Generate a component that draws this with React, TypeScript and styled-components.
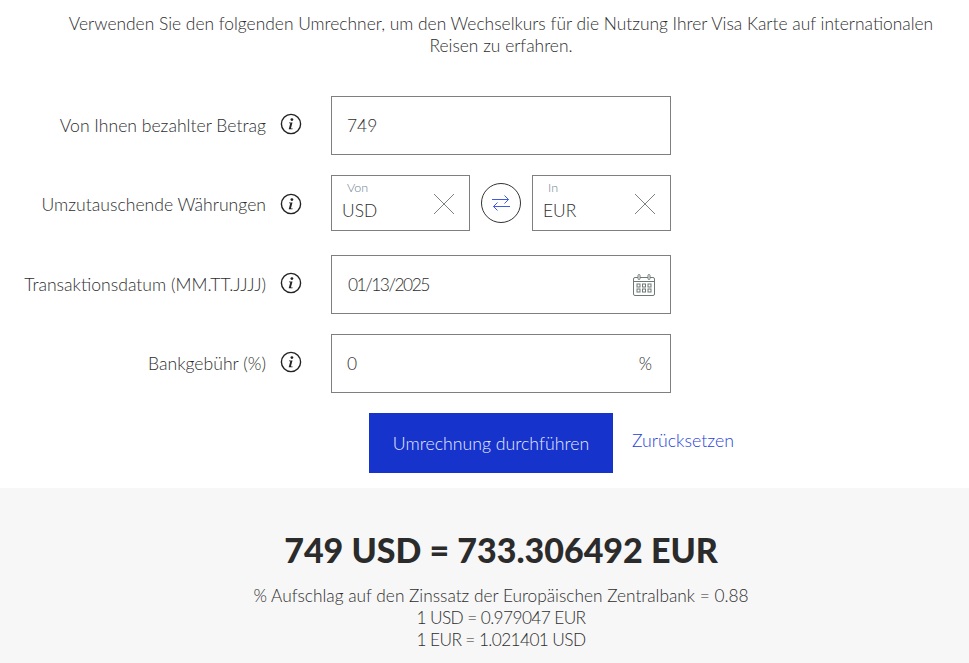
import styled, { createGlobalStyle } from "styled-components";

const GlobalStyles = createGlobalStyle`
  * {
    box-sizing: border-box;
  }
  html, body {
    margin: 0;
    padding: 0;
    background: #ffffff;
  }
  body {
    font-family: Lato, "Open Sans", "Liberation Sans", sans-serif;
    font-weight: 300;
    color: #2e2e2e;
    overflow: hidden;
  }
`;

function InfoIcon() {
  return (
    <InfoSvg viewBox="0 0 22 22" aria-hidden="true">
      <circle cx="11" cy="11" r="9.6" fill="none" stroke="#222" strokeWidth="1.4" />
      <circle cx="11.9" cy="6.6" r="1.4" fill="#222" />
      <path
        d="M9 9.5h3.5l-1.5 5.6c-.1.5.4.6 1.5.1v1H8.8c-.1 0 0-.8.2-1l1.3-4.9H9z"
        fill="#222"
      />
    </InfoSvg>
  );
}

function ClearIcon() {
  return (
    <ClearSvg viewBox="0 0 22 22" aria-hidden="true">
      <path d="M1 1l20 20M21 1L1 21" stroke="#7d8285" strokeWidth="1" fill="none" />
    </ClearSvg>
  );
}

function SwapIcon() {
  return (
    <svg width="18" height="16" viewBox="0 0 18 16" aria-hidden="true">
      <path
        d="M0 4.5h16.5M12.5 .5l4 4-4 4M18 11.5H1.5M5.5 7.5l-4 4 4 4"
        stroke="#3d5ce0"
        strokeWidth="1"
        fill="none"
      />
    </svg>
  );
}

function CalendarIcon() {
  return (
    <CalendarSvg viewBox="0 0 24 24" aria-hidden="true">
      <g fill="none" stroke="#6f7a76" strokeWidth="1">
        <rect x="1.5" y="4.5" width="21" height="18" rx="1.5" />
        <path d="M1.5 8.5h21" />
        <rect x="6" y="1.5" width="2" height="5" rx="1" fill="#fff" />
        <rect x="16" y="1.5" width="2" height="5" rx="1" fill="#fff" />
        <rect x="5" y="11" width="3" height="3" />
        <rect x="10.5" y="11" width="3" height="3" />
        <rect x="16" y="11" width="3" height="3" />
        <rect x="5" y="16" width="3" height="3" />
        <rect x="10.5" y="16" width="3" height="3" />
        <rect x="16" y="16" width="3" height="3" />
      </g>
    </CalendarSvg>
  );
}

function CurrencyBox({ caption, code }: { caption: string; code: string }) {
  return (
    <CurrencyField>
      <CurrencyText>
        <Caption>{caption}</Caption>
        <Code>{code}</Code>
      </CurrencyText>
      <ClearIcon />
    </CurrencyField>
  );
}

export default function App() {
  return (
    <Page>
      <GlobalStyles />
      <Intro>
        Verwenden Sie den folgenden Umrechner, um den Wechselkurs für die Nutzung Ihrer Visa Karte
        auf internationalen Reisen zu erfahren.
      </Intro>

      <Form>
        <Row>
          <Label>Von Ihnen bezahlter Betrag</Label>
          <InfoCell>
            <InfoIcon />
          </InfoCell>
          <Field>749</Field>
        </Row>

        <Row $after={24}>
          <Label $shift={3}>Umzutauschende Währungen</Label>
          <InfoCell $shift={3}>
            <InfoIcon />
          </InfoCell>
          <CurrencyGroup>
            <CurrencyBox caption="Von" code="USD" />
            <SwapButton>
              <SwapIcon />
            </SwapButton>
            <CurrencyBox caption="In" code="EUR" />
          </CurrencyGroup>
        </Row>

        <Row>
          <Label>Transaktionsdatum (MM.TT.JJJJ)</Label>
          <InfoCell>
            <InfoIcon />
          </InfoCell>
          <Field>
            <DateText>01/13/2025</DateText>
            <CalendarIcon />
          </Field>
        </Row>

        <Row>
          <Label>Bankgebühr (%)</Label>
          <InfoCell>
            <InfoIcon />
          </InfoCell>
          <Field>
            0<Suffix>%</Suffix>
          </Field>
        </Row>

        <Actions>
          <SubmitButton>Umrechnung durchführen</SubmitButton>
          <ResetLink>Zurücksetzen</ResetLink>
        </Actions>
      </Form>

      <Result>
        <ResultTitle>749 USD = 733.306492 EUR</ResultTitle>
        <ResultLine>% Aufschlag auf den Zinssatz der Europäischen Zentralbank = 0.88</ResultLine>
        <ResultLine $tight>1 USD = 0.979047 EUR</ResultLine>
        <ResultLine $tight>1 EUR = 1.021401 USD</ResultLine>
      </Result>
    </Page>
  );
}

const Page = styled.div`
  width: 969px;
  height: 663px;
  overflow: hidden;
  display: flex;
  flex-direction: column;
`;

const Intro = styled.p`
  margin: 0;
  padding: 13px 33px 0 66px;
  height: 96px;
  font-size: 17.4px;
  line-height: 22px;
  text-align: center;
`;

const Form = styled.div`
  display: flex;
  flex-direction: column;
  height: 392px;
`;

const Row = styled.div<{ $after?: number }>`
  display: flex;
  align-items: center;
  margin-bottom: ${(p) => p.$after ?? 20}px;
`;

const Label = styled.div<{ $shift?: number }>`
  width: 266px;
  text-align: right;
  font-size: 17.6px;
  line-height: 22px;
  white-space: nowrap;
  margin-top: ${(p) => p.$shift ?? 0}px;
`;

const InfoCell = styled.div<{ $shift?: number }>`
  width: 65px;
  padding-left: 14px;
  display: flex;
  margin-top: ${(p) => (p.$shift ?? 0) * 2 - 4}px;
`;

const InfoSvg = styled.svg`
  width: 22px;
  height: 22px;
`;

const Field = styled.div`
  width: 340px;
  height: 59px;
  border: 1px solid #7f7f7f;
  padding: 0 18px 0 15px;
  display: flex;
  align-items: center;
  justify-content: space-between;
  font-size: 17.4px;
`;

const DateText = styled.span`
  padding-left: 1px;
  letter-spacing: -1.5px;
`;

const CalendarSvg = styled.svg`
  width: 24px;
  height: 24px;
  margin-right: -4px;
`;

const Suffix = styled.span`
  font-size: 17px;
`;

const CurrencyGroup = styled.div`
  width: 340px;
  display: flex;
  justify-content: space-between;
  align-items: center;
`;

const CurrencyField = styled.div`
  width: 139px;
  height: 56px;
  border: 1px solid #7f7f7f;
  padding: 0 14px 0 10px;
  display: flex;
  align-items: center;
  justify-content: space-between;
`;

const CurrencyText = styled.div`
  display: flex;
  flex-direction: column;
`;

const Caption = styled.span`
  font-size: 12.5px;
  line-height: 14px;
  padding-left: 5px;
  margin-top: -4px;
  color: #6f8290;
`;

const Code = styled.span`
  font-size: 17.4px;
  line-height: 22px;
  margin-top: 5px;
`;

const ClearSvg = styled.svg`
  width: 22px;
  height: 22px;
  margin-top: 2px;
`;

const SwapButton = styled.div`
  width: 40px;
  height: 40px;
  border-radius: 50%;
  border: 1px solid #333;
  display: flex;
  align-items: center;
  justify-content: center;
`;

const Actions = styled.div`
  display: flex;
  align-items: flex-start;
  padding-left: 369px;
`;

const SubmitButton = styled.div`
  width: 244px;
  height: 60px;
  background: #1633cc;
  color: #e6eaff;
  font-size: 17.7px;
  display: flex;
  align-items: center;
  justify-content: center;
`;

const ResetLink = styled.a`
  margin-left: 19px;
  margin-top: 17px;
  font-size: 17.7px;
  line-height: 22px;
  color: #1f3fd8;
`;

const Result = styled.div`
  flex: 1;
  background: #f7f7f7;
  padding: 41px 0 0 33px;
  display: flex;
  flex-direction: column;
  align-items: center;
`;

const ResultTitle = styled.h2`
  margin: 0 0 14px;
  font-size: 34px;
  line-height: 42px;
  font-weight: 900;
  color: #2b2b2b;
`;

const ResultLine = styled.div<{ $tight?: boolean }>`
  font-size: 17.3px;
  line-height: 22px;
  letter-spacing: ${(p) => (p.$tight ? "-0.6px" : "0")};
`;
